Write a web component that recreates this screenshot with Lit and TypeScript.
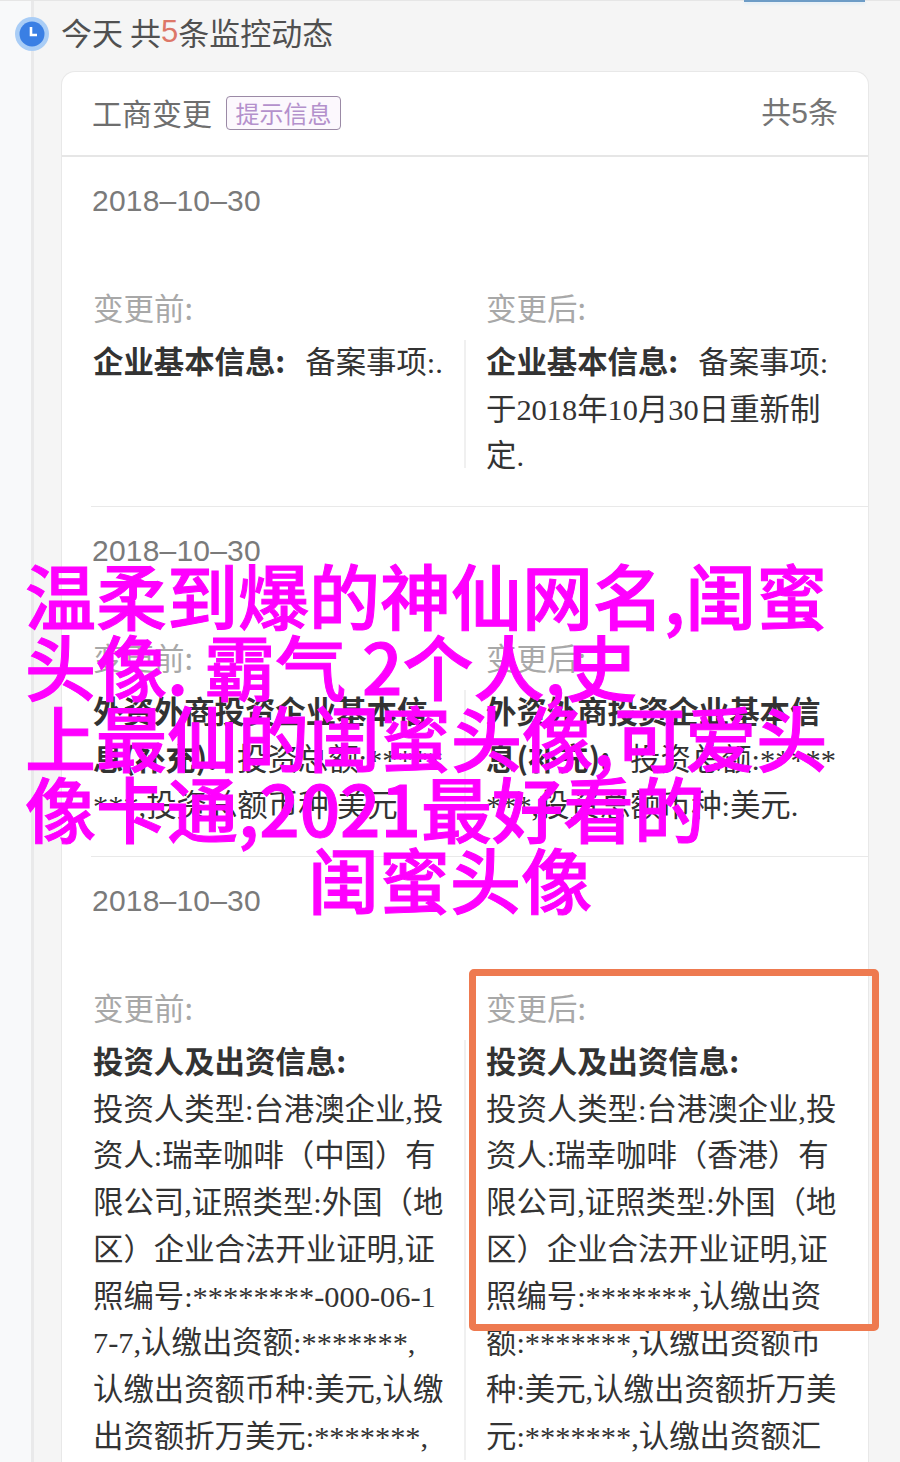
import { LitElement, html, css } from "lit";
import { customElement } from "lit/decorators.js";

type Row = { date: string; before: string[]; after: string[]; boxed?: boolean };

const rows: Row[] = [
  {
    date: "2018–10–30",
    before: ["企业基本信息:|备案事项:."],
    after: ["企业基本信息:|备案事项:", "于2018年10月30日重新制", "定."],
  },
  {
    date: "2018–10–30",
    before: ["外资外商投资企业基本信|", "息(补充):|投资总额:*****", "***,投资总额币种:美元."],
    after: ["外资外商投资企业基本信|", "息(补充):|投资总额:*****", "***,投资总额币种:美元."],
  },
  {
    date: "2018–10–30",
    boxed: true,
    before: [
      "投资人及出资信息:|",
      "投资人类型:台港澳企业,投",
      "资人:瑞幸咖啡（中国）有",
      "限公司,证照类型:外国（地",
      "区）企业合法开业证明,证",
      "照编号:********-000-06-1",
      "7-7,认缴出资额:*******,",
      "认缴出资额币种:美元,认缴",
      "出资额折万美元:*******,",
    ],
    after: [
      "投资人及出资信息:|",
      "投资人类型:台港澳企业,投",
      "资人:瑞幸咖啡（香港）有",
      "限公司,证照类型:外国（地",
      "区）企业合法开业证明,证",
      "照编号:*******,认缴出资",
      "额:*******,认缴出资额币",
      "种:美元,认缴出资额折万美",
      "元:*******,认缴出资额汇",
    ],
  },
];

const headline = [
  "温柔到爆的神仙网名,闺蜜",
  "头像. 霸气 2个人,史",
  "上最仙的闺蜜头像,可爱头",
  "像卡通,2021最好看的",
];

@customElement("app-root")
export class AppRoot extends LitElement {
  static styles = css`
    :host {
      display: block;
      position: relative;
      width: 900px;
      height: 1462px;
      overflow: hidden;
      background: #f5f5f5;
      font-family: "Liberation Serif", "Noto Sans CJK SC", serif;
      color: #333;
    }
    .page {
      display: flex;
      height: 1462px;
      border-top: 1px solid #e6e6e6;
      box-sizing: border-box;
    }
    .rail {
      flex: none;
      width: 31px;
      background: #f8f9fa;
      border-right: 3px solid #e9e9ea;
    }
    .main {
      flex: 1;
      min-width: 0;
      display: flex;
      flex-direction: column;
    }
    .today {
      flex: none;
      height: 70px;
      padding: 0 0 10px 27px;
      display: flex;
      align-items: center;
      box-sizing: border-box;
      font: 400 31px/1 "Noto Sans CJK SC", sans-serif;
      color: #505050;
    }
    .today b {
      font-weight: 400;
      font-family: "Liberation Sans", sans-serif;
      color: #dd7768;
    }
    .clock {
      position: absolute;
      left: 15px;
      top: 17px;
      width: 34px;
      height: 34px;
    }
    .stub {
      position: absolute;
      left: 744px;
      top: 0;
      width: 121px;
      height: 2px;
      background: #6d9cc6;
      box-shadow: 0 2px 3px #dcebf8;
    }
    .card {
      flex: 1;
      margin-left: 27px;
      width: 808px;
      background: #fff;
      border: 1px solid #e8e8e8;
      border-bottom: 0;
      border-radius: 14px 14px 0 0;
      box-sizing: border-box;
    }
    .head {
      height: 85px;
      display: flex;
      align-items: center;
      padding: 0 30px 4px 30px;
      border-bottom: 2px solid #e6e6e6;
      box-sizing: border-box;
      font: 400 30px/1 "Noto Sans CJK SC", sans-serif;
      color: #6e6e6e;
    }
    .tag {
      margin: 2px 0 0 14px;
      width: 115px;
      height: 34px;
      box-sizing: border-box;
      display: flex;
      align-items: center;
      justify-content: center;
      border: 1.5px solid #9b8aa6;
      border-radius: 4px;
      background: #fcf8fd;
      color: #b491cc;
      font-size: 24px;
    }
    .count {
      margin-left: auto;
      font-size: 30px;
      color: #757575;
    }
    .count b {
      font: 400 30px/1 "Liberation Sans", sans-serif;
    }
    .row {
      margin-left: 29px;
      padding-top: 20px;
      height: 350px;
      box-sizing: border-box;
      border-bottom: 1px solid #e9e9e9;
    }
    .row:last-child {
      height: auto;
      border-bottom: 0;
    }
    .date {
      padding-left: 1px;
      font: 30px/47px "Liberation Sans", sans-serif;
      letter-spacing: 0.2px;
      color: #7a7a7a;
    }
    .cols {
      display: grid;
      grid-template-columns: 375px 1fr;
      margin-top: 60px;
    }
    .col {
      position: relative;
      display: flex;
      flex-direction: column;
      padding-left: 2px;
    }
    .col + .col {
      padding-left: 20px;
    }
    .label {
      font: 400 30.5px/47px "Noto Sans CJK SC", sans-serif;
      color: #a8a8a8;
      margin-bottom: 9px;
    }
    .body {
      flex: 1;
      font-size: 30.4px;
      line-height: 46.7px;
      color: #333;
    }
    .col + .col .body {
      margin-bottom: -12px;
    }
    .col:first-child .body {
      border-right: 2px solid #f0f0f0;
    }
    .line {
      white-space: nowrap;
    }
    .title {
      font-weight: 700;
      font-family: "Noto Sans CJK SC", sans-serif;
      line-height: 1;
    }
    .value {
      margin-left: 20px;
    }
    .box {
      position: absolute;
      left: 3px;
      top: -15px;
      width: 410px;
      height: 362px;
      box-sizing: border-box;
      border: 7px solid #ee7a50;
      border-radius: 5px;
    }
    .headline {
      position: absolute;
      left: 25px;
      top: 558px;
      width: 850px;
      font: 500 71px/71px "Noto Sans CJK SC", sans-serif;
      -webkit-text-stroke: 1px #ff00ff;
      color: #ff00ff;
    }
    .hl {
      white-space: nowrap;
    }
    .hl.center {
      text-align: center;
    }
  `;

  private renderLine(line: string) {
    const [a, b] = line.split("|");
    if (b === undefined) return html`<div class="line">${a}</div>`;
    return html`<div class="line">
      <span class="title">${a}</span>${b ? html`<span class="value">${b}</span>` : ""}
    </div>`;
  }

  private renderCell(label: string, lines: string[], boxed = false) {
    return html`<div class="col">
      <div class="label">${label}</div>
      <div class="body">${lines.map((l) => this.renderLine(l))}</div>
      ${boxed ? html`<div class="box"></div>` : ""}
    </div>`;
  }

  render() {
    return html`
      <div class="page">
        <div class="rail"></div>
        <div class="main">
          <div class="today">今天 共<b>5</b>条监控动态</div>
          <div class="card">
            <div class="head">
              <span>工商变更</span>
              <span class="tag">提示信息</span>
              <span class="count">共<b>5</b>条</span>
            </div>
            ${rows.map(
              (r) => html`<div class="row">
                <div class="date">${r.date}</div>
                <div class="cols">
                  ${this.renderCell("变更前:", r.before)}
                  ${this.renderCell("变更后:", r.after, r.boxed)}
                </div>
              </div>`
            )}
          </div>
        </div>
      </div>
      <div class="stub"></div>
      <svg class="clock" viewBox="0 0 34 34">
        <circle cx="17" cy="17" r="17" fill="#a9cdf6" />
        <circle cx="17" cy="17" r="12.5" fill="#3a7fe4" />
        <path d="M16 10v8h6" fill="none" stroke="#fff" stroke-width="2.6" />
      </svg>
      <div class="headline">
        ${headline.map((l) => html`<div class="hl">${l}</div>`)}
        <div class="hl center">闺蜜头像</div>
      </div>
    `;
  }
}
